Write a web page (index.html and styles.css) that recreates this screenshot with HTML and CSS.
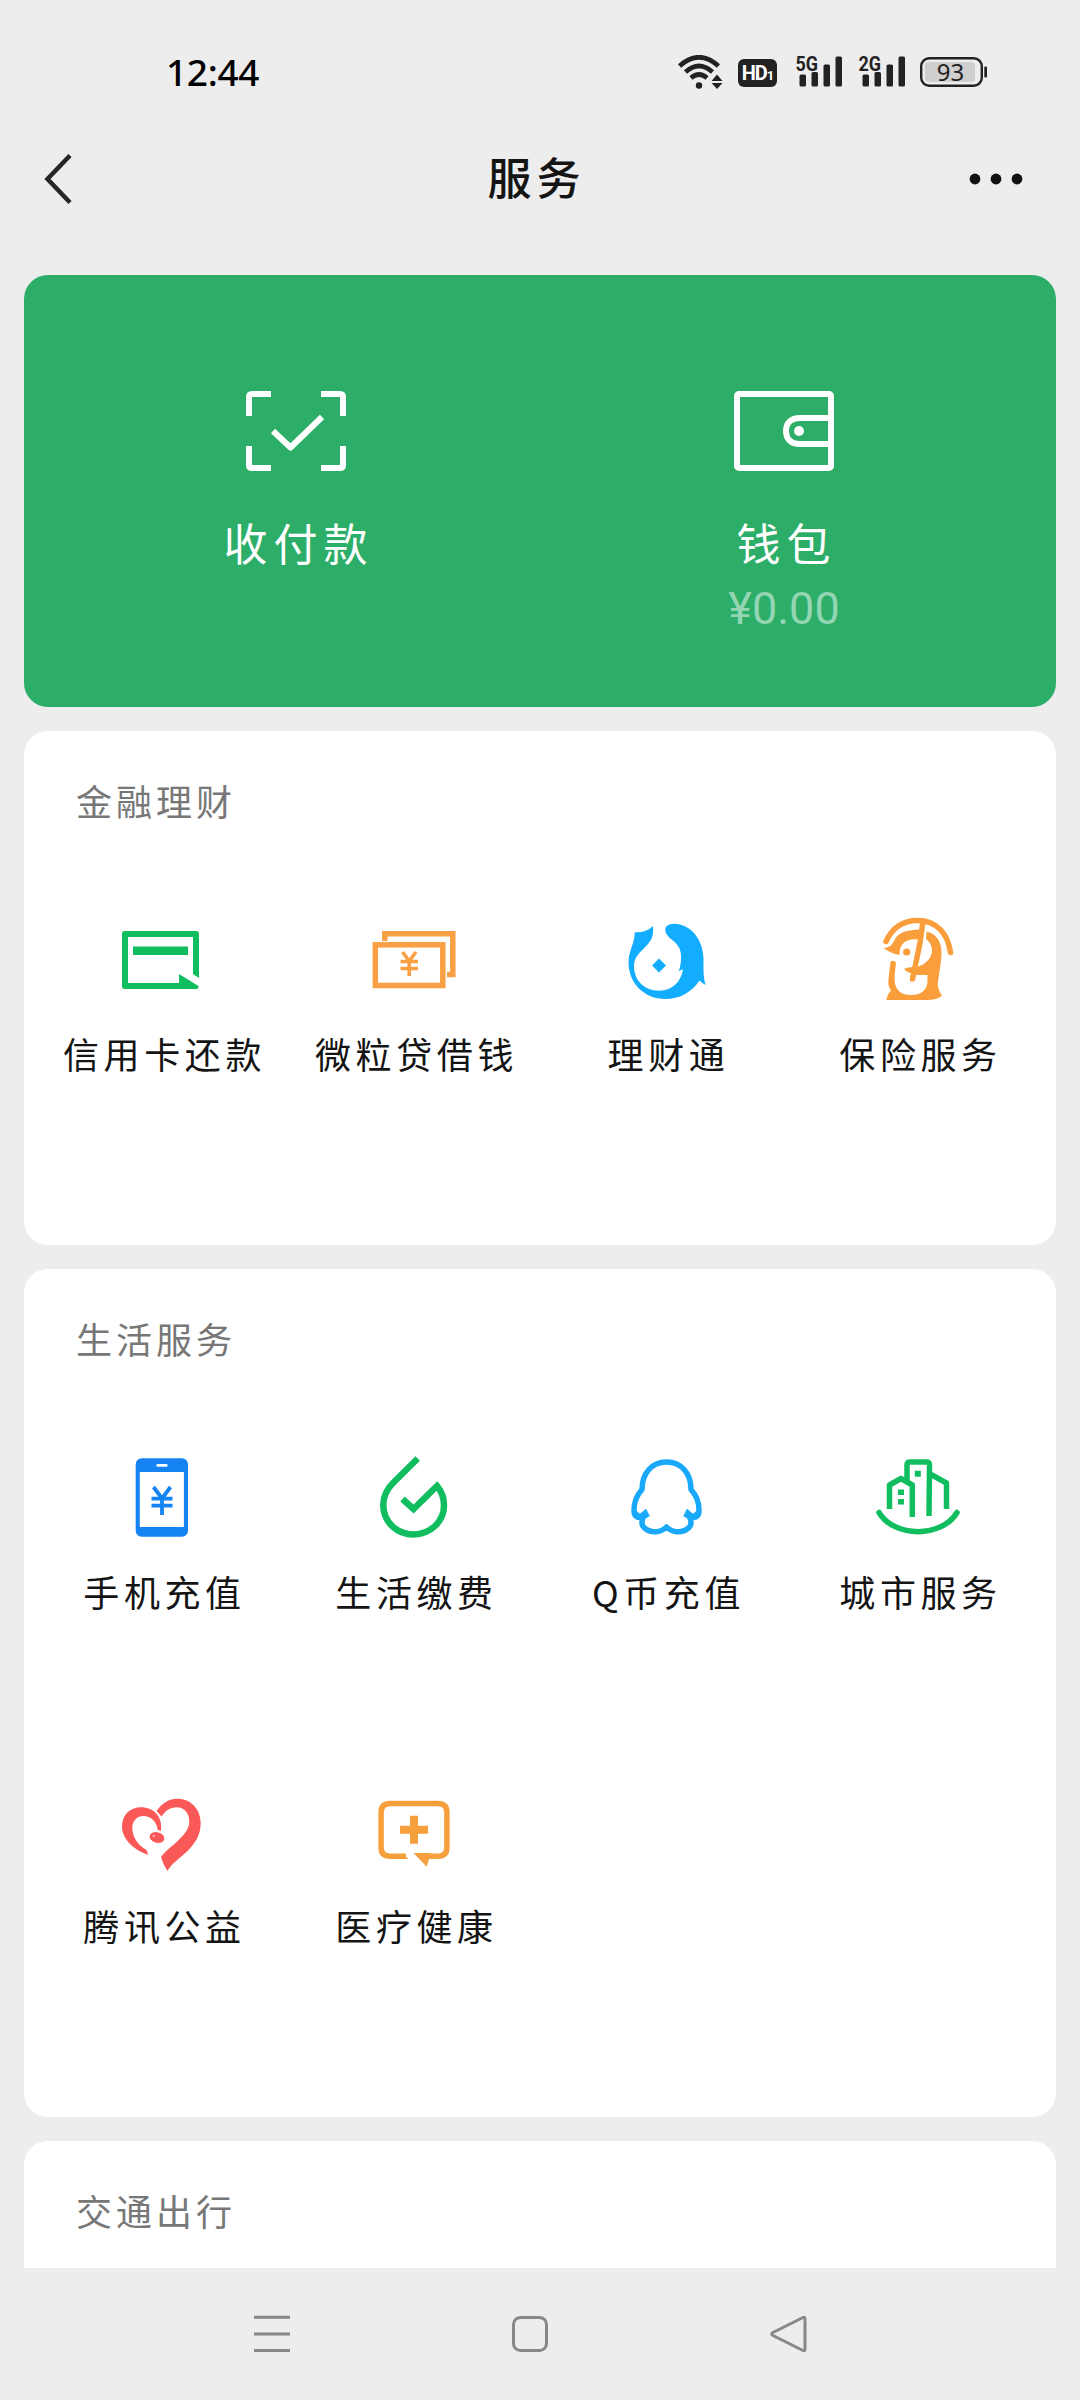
FILE: index.html
```html
<!DOCTYPE html>
<html lang="zh-CN">
<head>
<meta charset="utf-8">
<title>服务</title>
<link rel="stylesheet" href="styles.css">
</head>
<body>
<div class="screen">
  <div class="status-bar">
    <span class="clock">12:44</span>
    <div class="status-icons">
      <svg class="wifi" width="46" height="34" viewBox="0 0 46 34" fill="none" stroke="#222" stroke-width="4.6">
        <path d="M1.500 11Q21 -6.500 40.500 11"/><path d="M7.500 17Q21 5 34.500 17"/><path d="M13 23Q21 16 29 23"/>
        <circle cx="21" cy="30.500" r="3.200" fill="#222" stroke="none"/>
        <path d="M39 19.500L44.500 26h-11zM39 34L33.500 28h11z" fill="#222" stroke="none"/>
      </svg>
      <span class="hd">HD<small>1</small></span>
      <svg class="signal" width="50" height="46" viewBox="-2 -6 50 46" fill="#222">
        <text class="net" x="-0.500" y="16.500" textLength="22.500" lengthAdjust="spacingAndGlyphs">5G</text>
        <rect x="3.500" y="20.500" width="6.500" height="12" rx="1.500"/><rect x="15.500" y="18" width="6.500" height="14.500" rx="1.500"/><rect x="27.500" y="10.500" width="6.500" height="22" rx="1.500"/><rect x="39.500" y="2.500" width="6.500" height="30" rx="1.500"/>
      </svg>
      <svg class="signal" width="50" height="46" viewBox="-2 -6 50 46" fill="#222">
        <text class="net" x="-0.500" y="16.500" textLength="22.500" lengthAdjust="spacingAndGlyphs">2G</text>
        <rect x="3.500" y="20.500" width="6.500" height="12" rx="1.500"/><rect x="15.500" y="18" width="6.500" height="14.500" rx="1.500"/><rect x="27.500" y="10.500" width="6.500" height="22" rx="1.500"/><rect x="39.500" y="2.500" width="6.500" height="30" rx="1.500"/>
      </svg>
      <svg class="battery" width="68" height="42" viewBox="0 -6 68 42">
        <rect x="1.200" y="1.200" width="60.600" height="27.600" rx="8" fill="none" stroke="#222" stroke-width="2.400"/>
        <rect x="5" y="5" width="50" height="20" rx="4" fill="#cfcfcf"/>
        <rect x="64.300" y="9.500" width="2.700" height="11" rx="1" fill="#222"/>
        <text class="level" x="30.500" y="23.500" text-anchor="middle">93</text>
      </svg>
    </div>
  </div>

  <header class="nav">
    <svg width="30" height="52" viewBox="0 0 30 52" fill="none" stroke="#262626" stroke-width="4.500"><path d="M26 2.500L3.500 26L26 49.500"/></svg>
    <h1>服务</h1>
    <svg width="54" height="12" viewBox="0 0 54 12" fill="#111"><circle cx="6" cy="6" r="5.400"/><circle cx="27" cy="6" r="5.400"/><circle cx="48" cy="6" r="5.400"/></svg>
  </header>

  <main>
    <section class="pay">
      <div class="pay-item">
        <svg width="100" height="80" viewBox="0 0 100 80" fill="none" stroke="#fff" stroke-width="6">
          <path d="M25 3H6Q3 3 3 6V25M75 3H94Q97 3 97 6V25M25 77H6Q3 77 3 74V55M75 77H94Q97 77 97 74V55M27 40L44.500 56.500L76 26" stroke-linejoin="round"/>
        </svg>
        <span class="pay-name">收付款</span>
      </div>
      <div class="pay-item">
        <svg width="100" height="80" viewBox="0 0 100 80" fill="none" stroke="#fff" stroke-width="6">
          <rect x="3" y="3" width="94" height="74" rx="2"/>
          <path d="M96 27H66C57 27 52 32 52 40S57 53 66 53H96"/><circle cx="65" cy="40" r="5" fill="#fff" stroke="none"/>
        </svg>
        <span class="pay-name">钱包</span>
        <span class="balance">¥0.00</span>
      </div>
    </section>

    <section class="card">
      <h2>金融理财</h2>
      <div class="grid">
        <div class="tile">
          <svg viewBox="0 0 96 96" fill="#10be60"><path d="M12 19H83Q86 19 86 22V66L80 62V25H15V71H66V62L85.500 74Q86 77 83 77H12Q9 77 9 74V22Q9 19 12 19Z"/><path d="M20 34.500H75V43H20Z"/></svg>
          <span>信用卡还款</span>
        </div>
        <div class="tile">
          <svg viewBox="0 0 96 96" fill="none" stroke="#f8a043" stroke-width="5.500"><path d="M19.800 29V21.800H87.800V62.500H82"/><rect x="10.300" y="32.800" width="67.500" height="40.700"/><path d="M37.500 40L44.200 49L51 40M44.200 48V64M35.500 49.500H53M35.500 56.500H53" stroke-width="3.600"/></svg>
          <span>微粒贷借钱</span>
        </div>
        <div class="tile">
          <svg viewBox="0 0 96 96" fill="#12adff"><path d="M17.700 20.300Q29 21 36 14C36.500 22 35.500 27 31 32C24 40 17 44 17 54C17 69 28 78.700 42 78.700C55 78.700 64 70 66 57.500Q64 57.500 61.500 59.500Q64.500 52 64 44C64 35 59 31 54 27C49 23 47 18 49 15C51 12 56 11.500 60 12C76 14 86.500 30 86.500 47C86.500 56 86 64 88.600 73Q85.500 71.500 82.500 68.500C74 81 62 87 48.700 87C27 87 11.500 71 11.500 50C11.500 39 18 31 17.700 20.300Z"/><path d="M42 46.500L49 53.500L42 60.500L35 53.500Z"/></svg>
          <span>理财通</span>
        </div>
        <div class="tile">
          <svg viewBox="0 0 96 96" fill="#fa9d3b"><path d="M17 29.500C24 14 35 8.500 48.500 8.500C68 8.500 79 22 81.500 40.500M54 9L51 31L43.500 67" fill="none" stroke="#fa9d3b" stroke-width="5.500" stroke-linecap="round"/><path d="M14.500 36Q22 35.500 24.500 30C28 21 36 18 51 17.500L49.500 27.500C36 26 30 33 30.500 43Q22 41.500 14.500 36Z"/><circle cx="37.700" cy="40" r="3.600"/><path d="M57.500 19.500C68 22 72.500 30 72.500 41C72 55 68 71 69 75Q70 80 73 83.500Q68 88 58 88H17.500Q18 83 22 78.500Q18.500 74 19.500 67L21.500 50Q24 47.500 27 50.500L25.500 65C25 77 31 83 42 83C53 83 58.500 77 58.500 69V63H52C46 63 39 61 35 57Q39 54.500 48 55L53 53C60 49 63 44 63 38Q62.500 31 57 27Z"/></svg>
          <span>保险服务</span>
        </div>
      </div>
    </section>

    <section class="card">
      <h2>生活服务</h2>
      <div class="grid">
        <div class="tile">
          <svg viewBox="0 0 96 96"><rect x="22.700" y="8.300" width="52.300" height="78.400" rx="6" fill="#1683f2"/><path d="M26.800 22H70.900V77H26.800Z" fill="#fff"/><rect x="43.500" y="14" width="11" height="2.800" rx="1" fill="#fff"/><path d="M40.500 37L49 48.500L57.500 37M49 48V65M38.500 48.700H59.500M38.500 55.700H59.500" fill="none" stroke="#1683f2" stroke-width="3.800"/></svg>
          <span>手机充值</span>
        </div>
        <div class="tile">
          <svg viewBox="0 0 96 96" fill="none" stroke="#10be60" stroke-width="6.500"><path d="M52.700 8.500L28 33C20 41 18.300 48 18.300 55C18.300 72 32 84.500 48.600 84.500S79 71.500 79 55.500Q79 44 72 36L48.500 59L37.500 49"/></svg>
          <span>生活缴费</span>
        </div>
        <div class="tile">
          <svg viewBox="0 0 96 96" fill="none" stroke="#1aa9fa" stroke-width="5.500" stroke-linejoin="round"><path d="M49.500 12C34 12 25 24 25 39.500C20 45 17 53 17 60Q17 66 20 67L26 68Q23.500 74 27 77.500C33 83.500 44 83 49.500 77C55 83 66 83.500 72 77.500Q75.500 74 73 68L79 67Q82 66 82 60C82 53 79 45 74 39.500C74 24 65 12 49.500 12Z"/><path d="M18 67L26 70L32.500 66L29 59L23 64L18 60M81 67L73 70L66.500 66L70 59L76 64L81 60" fill="#1aa9fa" stroke-width="0.500"/></svg>
          <span>Q币充值</span>
        </div>
        <div class="tile">
          <svg viewBox="0 0 96 96" fill="none" stroke="#10be60" stroke-width="5.500"><path d="M10 62.500C25 88 73 88 88 62.500" stroke-linecap="round"/><path d="M20.500 59V35L32 28.500L43.300 35V67M38 31V15Q38 12 41 12H57.500Q60.500 12 60.500 15L60 66M61 24L77.500 33V59" stroke-linejoin="round"/><path d="M45.800 20.700h6v6h-6zM29 39.500h6v5.500h-6zM29 49h6v5.500h-6z" fill="#10be60" stroke="none"/></svg>
          <span>城市服务</span>
        </div>
        <div class="tile">
          <svg viewBox="0 0 96 96" fill="#fb5858"><path d="M35.300 71C19 65 9 54 9 42.700C9 31 17 23.300 28 23.300C40 23.300 50 32 48 46.700L44.700 46C44 38 38 32 30.300 32C23 32 19 38 19.300 45C20 54 25 61 33.500 66Z"/><ellipse cx="44" cy="53.500" rx="7.500" ry="5.300" transform="rotate(15 44 53.500)"/><path d="M43.500 27C49 19 56 14.700 64 14.700C78 14.700 87.700 25 87.700 39.300C87.700 51 82 60 73.700 67.700C66 75 59 79 54.300 87Q50 80 48 73C55 63 76 52 76.300 37.700C76.500 29 71 23.300 63.700 23.300C57 23.300 52 27 48.700 32.500Z"/><path d="M39.500 52.500L42 51.500" stroke="#ffb1b1" stroke-width="1.600"/></svg>
          <span>腾讯公益</span>
        </div>
        <div class="tile">
          <svg viewBox="0 0 96 96" fill="#f6a03d"><path d="M41 72.200H25Q16.100 72.200 16.100 63.500V28.500Q16.100 19.500 25 19.500H73Q81.900 19.500 81.900 28.500V63.500Q81.900 72.200 73 72.200H57" fill="none" stroke="#f6a03d" stroke-width="5.500"/><path d="M37 69L43.500 75H36zM48.500 69H66L64 75L61.700 82.700ZM45 31.700h8v10h10v8h-10v10h-8v-10h-10v-8h10z"/></svg>
          <span>医疗健康</span>
        </div>
      </div>
    </section>

    <section class="card card-last">
      <h2>交通出行</h2>
    </section>
  </main>

  <footer class="system-nav">
    <svg viewBox="0 0 40 40"><path d="M2 3.300H38M2 20H38M2 36.500H38"/></svg>
    <svg viewBox="0 0 40 40"><rect x="3.500" y="3.500" width="33" height="33" rx="7"/></svg>
    <svg viewBox="0 0 40 40"><path d="M35 3.500Q37 2.500 37 5V35Q37 37.500 35 36.500L5 21.500Q2.500 20 5 18.500Z"/></svg>
  </footer>
</div>
</body>
</html>
```
FILE: styles.css
```css
* { box-sizing: border-box; }
body {
  margin: 0;
  background: #ededed;
  font-family: "Noto Sans CJK SC", sans-serif;
  color: #141414;
}
svg { display: block; flex: none; }
h1, h2 { margin: 0; font-weight: 400; }
.screen {
  width: 1080px;
  height: 2400px;
  display: flex;
  flex-direction: column;
  overflow: hidden;
}

.status-bar {
  height: 118px;
  padding: 26px 92px 0 166px;
  display: flex;
  align-items: center;
  justify-content: space-between;
}
.clock {
  font: 500 37px/52px "Noto Sans", sans-serif;
  color: #000;
  letter-spacing: -0.3px;
}
.status-icons { display: flex; align-items: center; }
.wifi { margin-top: -1px; }
.hd {
  width: 39px;
  height: 28px;
  margin: 2px 17px 0 14px;
  border-radius: 6px;
  background: #222;
  color: #fff;
  font: 700 20px/28px Roboto, sans-serif;
  text-align: center;
  letter-spacing: -1px;
}
.hd small { font-size: 13px; }
.signal { margin: -2px 13px 0 0; }
.net { font: 700 21px Roboto, sans-serif; }
.level { font: 400 24px "Noto Sans", sans-serif; fill: #222; }

.nav {
  height: 122px;
  padding: 0 57px 0 44px;
  display: flex;
  align-items: center;
  justify-content: space-between;
}
.nav h1 {
  font-size: 44px;
  line-height: 66px;
  font-weight: 500;
  letter-spacing: 5px;
  padding-left: 30px;
  margin-top: -7px;
}

main {
  height: 2028px;
  padding: 35px 24px 0;
  display: flex;
  flex-direction: column;
  gap: 24px;
}
.pay {
  height: 432px;
  flex: none;
  padding: 116px 28px 0;
  border-radius: 24px;
  background: #2dae68;
  color: #fff;
  display: grid;
  grid-template-columns: 1fr 1fr;
}
.pay-item { display: flex; flex-direction: column; align-items: center; }
.pay-name {
  margin: 39px 0 0 5px;
  font-size: 44px;
  line-height: 64px;
  letter-spacing: 6px;
}
.balance {
  font: 400 45px/54px Roboto, sans-serif;
  color: #94d6b3;
  margin-top: 8px;
}

.card {
  flex: none;
  padding: 0 12px 0 11px;
  border-radius: 24px;
  background: #fff;
}
.card h2 {
  height: 181px;
  padding: 42px 0 0 41px;
  font-size: 36px;
  line-height: 54px;
  letter-spacing: 4px;
  color: #777;
}
.grid {
  display: grid;
  grid-template-columns: repeat(4, 252px);
  row-gap: 1px;
}
.tile {
  height: 333px;
  display: flex;
  flex-direction: column;
  align-items: center;
}
.tile svg { width: 96px; height: 96px; }
.tile span {
  margin: 18px 0 0 7px;
  font-size: 36px;
  line-height: 54px;
  letter-spacing: 4.6px;
  white-space: nowrap;
}
.card-last { height: 127px; border-radius: 24px 24px 0 0; }
.card-last h2 { height: 127px; }

.system-nav {
  flex: 1;
  padding-left: 252px;
  display: flex;
  align-items: center;
  gap: 218px;
}
.system-nav svg {
  width: 40px;
  height: 40px;
  fill: none;
  stroke: #888;
  stroke-width: 3px;
}
```
